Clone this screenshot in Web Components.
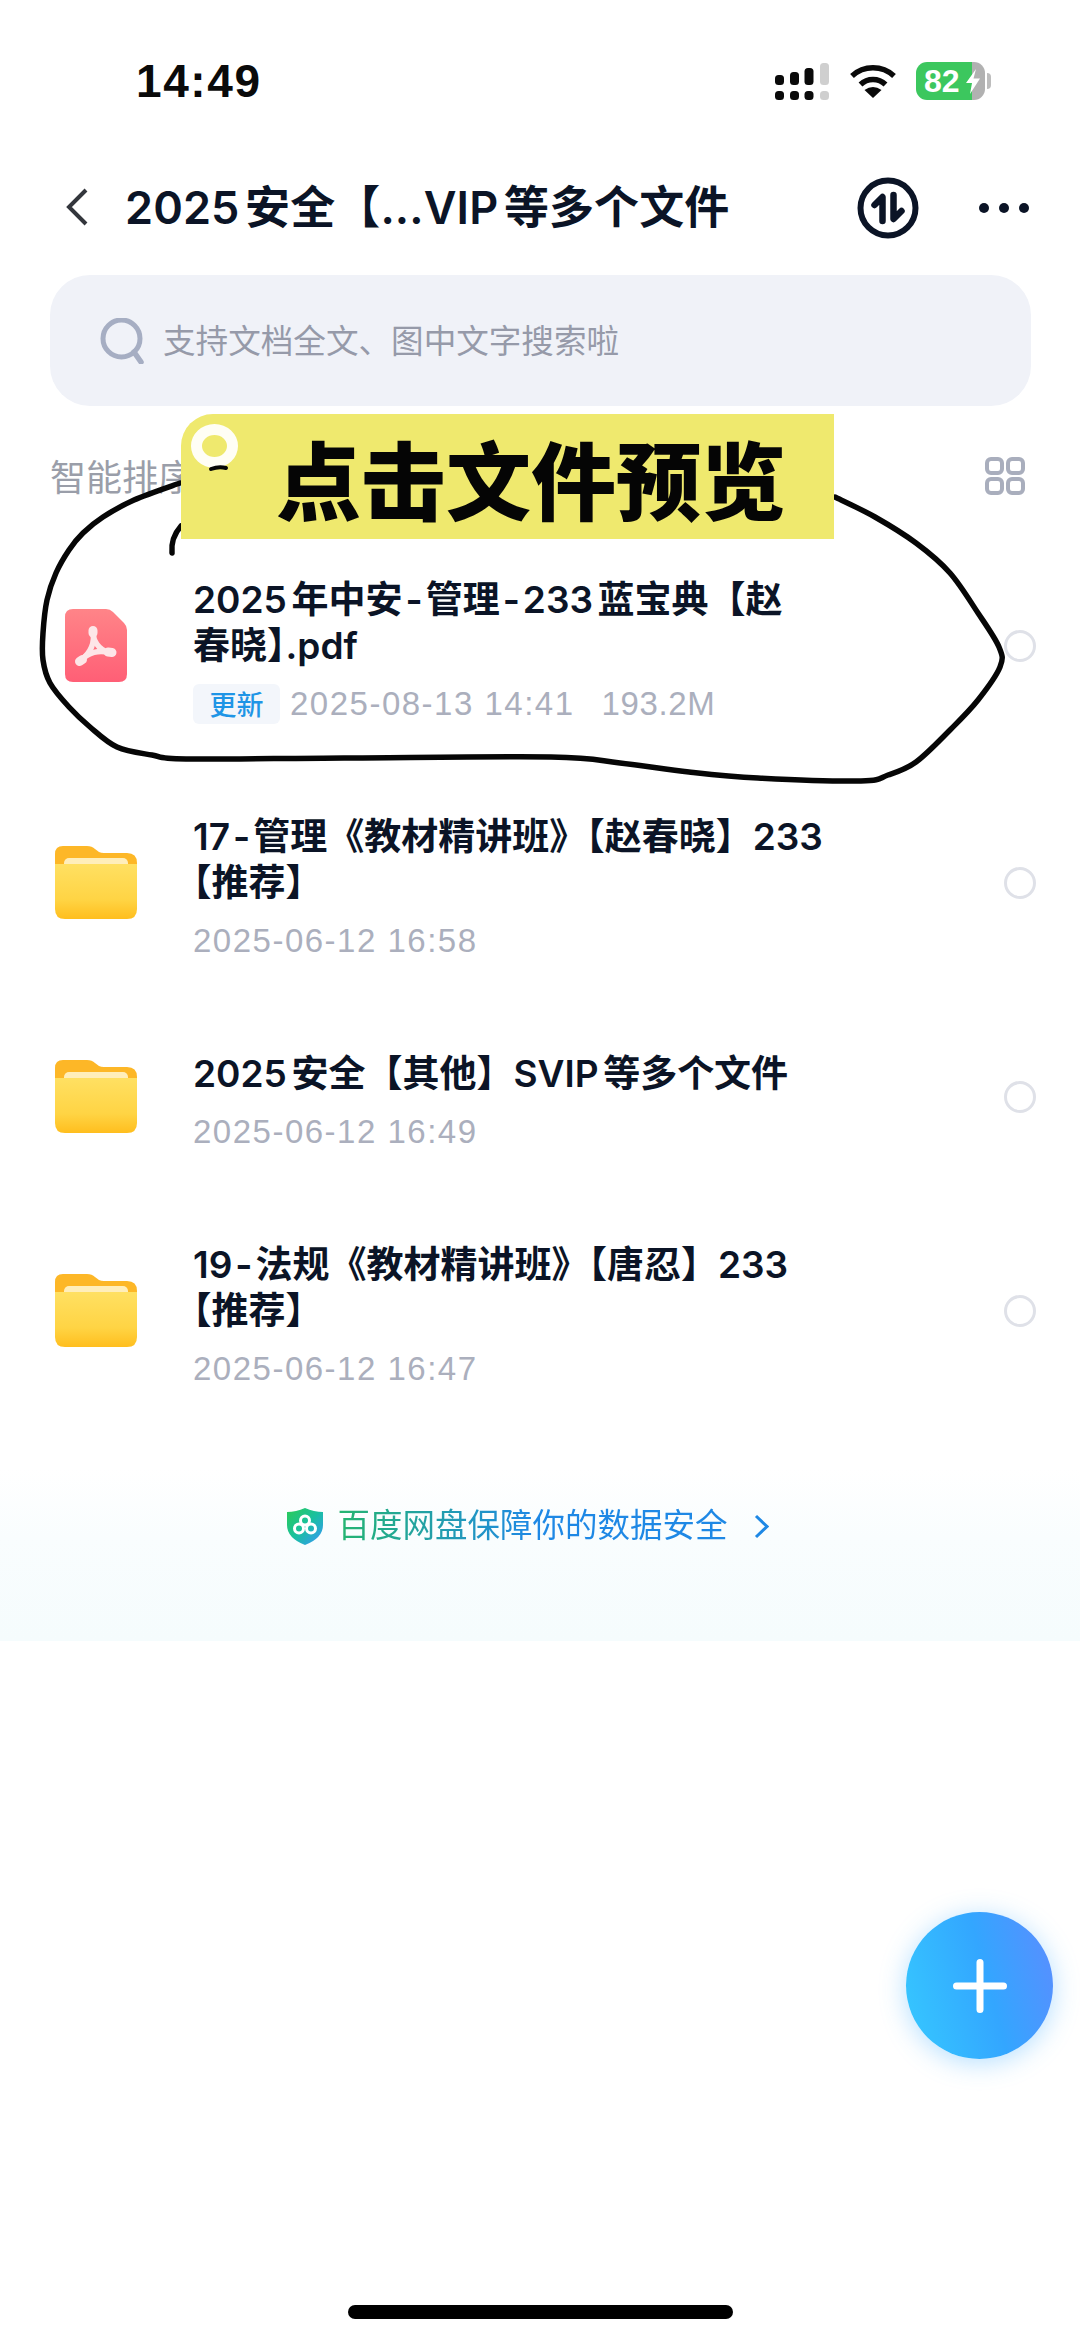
<!DOCTYPE html>
<html lang="zh-CN">
<head>
<meta charset="utf-8">
<title>百度网盘</title>
<style>
html, body { margin: 0; padding: 0; background: #fff; }
body {
  width: 1080px;
  height: 2341px;
  overflow: hidden;
  font-family: "Inter", "Noto Sans CJK SC", sans-serif;
  color: #0b1426;
}
</style>
</head>
<body>
<file-page>
  <status-bar time="14:49" level="82"></status-bar>
  <nav-bar>2025安全【...VIP等多个文件</nav-bar>
  <search-box>支持文档全文、图中文字搜索啦</search-box>
  <sort-bar>智能排序</sort-bar>
  <file-list>
    <file-row type="pdf" tag="更新" date="2025-08-13 14:41" size="193.2M">2025年中安<span class="dash">-</span>管理<span class="dash">-</span>233蓝宝典【赵<br>春晓<span class="halt">】</span>.pdf</file-row>
    <file-row type="folder" date="2025-06-12 16:58">17<span class="dash">-</span>管理《教材精讲班》【赵春晓】233<br>【推荐】</file-row>
    <file-row type="folder" date="2025-06-12 16:49">2025安全【其他】SVIP等多个文件</file-row>
    <file-row type="folder" date="2025-06-12 16:47">19<span class="dash">-</span>法规《教材精讲班》【唐忍】233<br>【推荐】</file-row>
  </file-list>
  <safe-banner>百度网盘保障你的数据安全</safe-banner>
  <home-bar></home-bar>
  <add-button></add-button>
  <hand-note>点击文件预览</hand-note>
</file-page>

<script>
class FilePage extends HTMLElement {
    constructor() {
        super();
        this.attachShadow({ mode: "open" }).innerHTML = `
<style>
:host { display: flex; flex-direction: column; position: relative; width: 1080px; height: 2341px; overflow: hidden; background: #fff; }
</style>
<slot></slot>`;
    }
}

class StatusBar extends HTMLElement {
    constructor() {
        super();
        const time = this.getAttribute("time");
        const level = this.getAttribute("level");
        this.attachShadow({ mode: "open" }).innerHTML = `
<style>
:host { display: flex; align-items: center; height: 162px; padding: 0 89px 0 136px; flex: none; }
.time { font: 700 46px/1 "Liberation Sans", sans-serif; color: #0a0a0a; letter-spacing: 1.6px; }
.right { margin-left: auto; display: flex; align-items: center; }
svg { display: block; }
.wifi { margin-left: 21px; }
.bat { margin-left: 20px; display: flex; align-items: center; }
.body { position: relative; width: 69px; height: 38px; border-radius: 11px; overflow: hidden; background: linear-gradient(90deg, #3cc75e 0 56px, #b1b1b1 56px); color: #fff; font: 700 32px/38px "Liberation Sans", sans-serif; padding-left: 8px; box-sizing: border-box; }
.bolt { position: absolute; left: 50px; top: 7px; }
.nub { width: 4px; height: 16px; margin-left: 2px; background: #bdbdbd; border-radius: 0 4px 4px 0; }
</style>
<span class="time">${time}</span>
<div class="right">
  <svg width="54" height="37" viewBox="0 0 54 37">
    <g fill="#0a0a0a">
      <rect x="0" y="12" width="9" height="10" rx="3.5"/><rect x="15" y="9" width="9" height="13" rx="3.5"/><rect x="29.500" y="5" width="9" height="17" rx="3.5"/>
      <rect x="0" y="28" width="9" height="9" rx="3.5"/><rect x="15" y="28" width="9" height="9" rx="3.5"/><rect x="29.500" y="28" width="9" height="9" rx="3.5"/>
    </g>
    <g fill="#cfcfcf"><rect x="45" y="0" width="9" height="22" rx="3.5"/><rect x="45" y="28" width="9" height="9" rx="3.5"/></g>
  </svg>
  <svg class="wifi" width="46" height="34" viewBox="0 0 46 34">
    <path d="M2 12A31 31 0 0 1 44 12M10.500 20.500A18 18 0 0 1 35.500 20.500" fill="none" stroke="#0a0a0a" stroke-width="5.500"/>
    <path d="M23 34L14.500 26Q23 20 31.500 26Z" fill="#0a0a0a"/>
  </svg>
  <div class="bat">
    <div class="body">${level}
      <svg class="bolt" width="14" height="25" viewBox="0 0 14 25"><path d="M10 0L0 14H6L4 25L14 9.500H7.500Z" fill="#fff"/></svg>
    </div>
    <div class="nub"></div>
  </div>
</div>`;
    }
}

class NavBar extends HTMLElement {
    constructor() {
        super();
        this.attachShadow({ mode: "open" }).innerHTML = `
<style>
:host { display: flex; align-items: center; height: 90px; flex: none; padding: 0 51px 0 64px; color: #0b1426; }
.back { flex: none; margin-right: 35px; }
.title { font-size: 45px; font-weight: 600; letter-spacing: .1px; white-space: nowrap; text-autospace: normal; padding-bottom: 5px; }
.acts { margin-left: auto; display: flex; align-items: center; }
svg { display: block; }
.sync { margin-top: 2px; }
.more { margin-left: 60px; display: flex; gap: 10px; margin-top: 2px; }
.more i { width: 10px; height: 10px; border-radius: 50%; background: #0b1426; }
</style>
<svg class="back" width="26" height="40" viewBox="0 0 26 40"><path d="M22 3L5 20L22 37" fill="none" stroke="#33363c" stroke-width="4"/></svg>
<span class="title"><slot></slot></span>
<div class="acts">
  <svg class="sync" width="62" height="62" viewBox="-31 -31 62 62">
    <circle r="27.500" fill="none" stroke="#0b1426" stroke-width="6"/>
    <path d="M-13.500 -3L-5.500 -11V13M13.500 3L5.500 11V-13" fill="none" stroke="#0b1426" stroke-width="6.500" stroke-linecap="round" stroke-linejoin="round"/>
  </svg>
  <div class="more"><i></i><i></i><i></i></div>
</div>`;
    }
}

class SearchBox extends HTMLElement {
    constructor() {
        super();
        this.attachShadow({ mode: "open" }).innerHTML = `
<style>
:host { display: flex; align-items: center; flex: none; height: 131px; margin: 23px 49px 0 50px; padding-left: 50px; border-radius: 40px; background: #f0f2f8; color: #969aa9; font-size: 32.600px; }
svg { display: block; margin-right: 19px; }
span { padding-bottom: 5px; }
</style>
<svg width="44" height="46" viewBox="0 0 44 46"><circle cx="21.500" cy="20.500" r="18.500" fill="none" stroke="#a6aec3" stroke-width="5"/><path d="M34 34L41 44" stroke="#a6aec3" stroke-width="5.500" stroke-linecap="round"/></svg>
<span><slot></slot></span>`;
    }
}

class SortBar extends HTMLElement {
    constructor() {
        super();
        this.attachShadow({ mode: "open" }).innerHTML = `
<style>
:host { display: flex; align-items: center; justify-content: space-between; flex: none; height: 70px; margin-top: 35px; padding: 0 55px 0 50px; color: #9a9ea9; font-size: 36px; }
svg { display: block; }
span { padding-bottom: 3px; }
</style>
<span><slot></slot></span>
<svg width="40" height="38" viewBox="0 0 40 38" fill="none" stroke="#a9aebd" stroke-width="4">
  <rect x="2" y="2" width="15" height="14" rx="4"/><rect x="23" y="2" width="15" height="14" rx="4"/>
  <rect x="2" y="22" width="15" height="14" rx="4"/><rect x="23" y="22" width="15" height="14" rx="4"/>
</svg>`;
    }
}

class FileList extends HTMLElement {
    constructor() {
        super();
        this.attachShadow({ mode: "open" }).innerHTML = `
<style>:host { display: flex; flex-direction: column; flex: none; margin-top: 22px; }</style>
<slot></slot>`;
    }
}

const pdfIcon = `
<svg width="62" height="73" viewBox="0 0 62 73">
  <defs><linearGradient id="p" x1="0" y1="0" x2="0" y2="1"><stop offset="0" stop-color="#ff8488"/><stop offset="1" stop-color="#ff5f76"/></linearGradient></defs>
  <path d="M8 0H41Q45 0 48 3L59 14Q62 17 62 21V65Q62 73 54 73H8Q0 73 0 65V8Q0 0 8 0Z" fill="url(#p)"/>
  <g fill="none" stroke="#fde6e8" stroke-linecap="round" stroke-linejoin="round">
    <path d="M28 23C30 33 26 44 16 51" stroke-width="5.500"/>
    <path d="M28 23C28 31 33 41 45 44" stroke-width="5.500"/>
    <path d="M16 51C23 44 34 40 45 44" stroke-width="5.500"/>
    <path d="M28 21.500V24M14.500 52.500L17.500 50.500M43 43L47 43.500" stroke-width="9"/>
  </g>
</svg>`;

const folderIcon = `
<svg width="82" height="73" viewBox="0 0 82 73">
  <defs><linearGradient id="f" x1="0" y1="0" x2="0" y2="1"><stop offset="0" stop-color="#ffe062"/><stop offset="0.650" stop-color="#ffd444"/><stop offset="1" stop-color="#ffbe1e"/></linearGradient></defs>
  <path d="M8 0H32Q37 0 40 3L44 6Q46 7 49 7H72Q82 7 82 17V40H0V8Q0 0 8 0Z" fill="#fdb727"/>
  <rect x="9" y="12" width="64" height="12" rx="5" fill="#ffeeba"/>
  <path d="M0 18H82V63Q82 73 72 73H10Q0 73 0 63Z" fill="url(#f)"/>
</svg>`;

class FileRow extends HTMLElement {
    constructor() {
        super();
        const type = this.getAttribute("type");
        const tag = this.getAttribute("tag");
        const size = this.getAttribute("size");
        this.attachShadow({ mode: "open" }).innerHTML = `
<style>
:host { display: flex; align-items: center; flex: none; padding: 44px 44px 44px 55px; }
.icon { flex: none; width: 82px; display: flex; justify-content: center; margin: 0 56px 12px 0; }
.text { flex: 1; min-width: 0; }
.name { font-size: 37px; line-height: 46px; font-weight: 600; color: #0b1426; white-space: nowrap; text-autospace: normal; text-spacing-trim: trim-start; }
::slotted(.halt) { font-feature-settings: "halt"; }
::slotted(.dash) { margin: 0 3px; }
.meta { display: flex; align-items: center; height: 44px; margin-top: 13px; font: 400 33px/44px "Liberation Sans", sans-serif; letter-spacing: 1.5px; color: #abafbd; }
.tag { width: 87px; height: 40px; margin-right: 10px; border-radius: 6px; background: #f3f6fb; color: #1f95e6; font: 500 27px/40px "Noto Sans CJK SC", sans-serif; text-align: center; letter-spacing: 0; }
.size { margin-left: 27px; letter-spacing: .6px; }
.radio { flex: none; width: 26px; height: 26px; border: 3px solid #dfe1e8; border-radius: 50%; margin: 0 0 12px 20px; }
svg { display: block; }
</style>
<div class="icon">${type === "pdf" ? pdfIcon : folderIcon}</div>
<div class="text">
  <div class="name"><slot></slot></div>
  <div class="meta">
    ${tag ? `<span class="tag">${tag}</span>` : ""}
    <span>${this.getAttribute("date")}</span>
    ${size ? `<span class="size">${size}</span>` : ""}
  </div>
</div>
<div class="radio"></div>`;
    }
}

class SafeBanner extends HTMLElement {
    constructor() {
        super();
        this.attachShadow({ mode: "open" }).innerHTML = `
<style>
:host { display: flex; align-items: flex-start; justify-content: center; flex: none; box-sizing: border-box; height: 173px; margin-top: 33px; padding: 40px 24px 0 0; background: linear-gradient(180deg, #fff 0, #f9fdfe 40%, #f5fcfd 100%); }
.in { display: flex; align-items: center; height: 36px; }
svg { display: block; }
.label { margin: 0 26px 0 14px; font-size: 32.500px; line-height: 36px; background: linear-gradient(90deg, #25b56f, #1e88e5 50%); -webkit-background-clip: text; background-clip: text; color: transparent; }
</style>
<div class="in">
  <svg width="36" height="37" viewBox="0 0 36 37">
    <defs><linearGradient id="s" x1="0" y1="0" x2="1" y2="1"><stop offset="0" stop-color="#2ccb55"/><stop offset="0.500" stop-color="#19c0a0"/><stop offset="1" stop-color="#3a94ff"/></linearGradient></defs>
    <path d="M18 0Q27 4 36 4V17Q36 30 18 37Q0 30 0 17V4Q9 4 18 0Z" fill="url(#s)"/>
    <g fill="none" stroke="#fff" stroke-width="3"><circle cx="18" cy="12.500" r="4.500"/><circle cx="12" cy="20.500" r="4.500"/><circle cx="24" cy="20.500" r="4.500"/></g>
  </svg>
  <span class="label"><slot></slot></span>
  <svg width="15" height="25" viewBox="0 0 15 25"><path d="M2 2L13 12.500L2 23" fill="none" stroke="#1e88e5" stroke-width="3"/></svg>
</div>`;
    }
}

class HomeBar extends HTMLElement {
    constructor() {
        super();
        this.attachShadow({ mode: "open" }).innerHTML = `
<style>
:host { display: block; flex: none; width: 385px; height: 14px; margin: auto auto 22px 348px; border-radius: 7px; background: #000; }
</style>`;
    }
}

class AddButton extends HTMLElement {
    constructor() {
        super();
        this.attachShadow({ mode: "open" }).innerHTML = `
<style>
:host { position: absolute; left: 906px; top: 1912px; width: 147px; height: 147px; border-radius: 50%; display: flex; align-items: center; justify-content: center; background: linear-gradient(75deg, #36c9ff 0%, #33a6ff 55%, #5c8cff 100%); box-shadow: 0 4px 26px rgba(60, 170, 255, .38); }
svg { display: block; }
</style>
<svg width="54" height="54" viewBox="0 0 54 54"><path d="M3.500 27H50.500M27 3.500V50.500" stroke="#fff" stroke-width="7" stroke-linecap="round"/></svg>`;
    }
}

const scribble = [
    [180,483],[134,500],[103,517],[83,533],[69,550],[56,573],[47,600],[43,633],[43,660],[50,683],[69,707],[90,727],[117,747],[152,755],[186,759],
    [344,758],[551,757],[620,763],[689,772],[758,778],[861,781],[888,775],[916,762],[950,730],[978,700],[1000,667],[999,647],[978,613],[950,573],[916,543],[875,517],[835,497]
];

// catmull-rom through the points, so the marker line has no corners
function smoothPath(pts) {
    let d = `M${pts[0][0]} ${pts[0][1]}`;
    for (let i = 0; i < pts.length - 1; i++) {
        const a = pts[Math.max(i - 1, 0)];
        const b = pts[i];
        const c = pts[i + 1];
        const e = pts[Math.min(i + 2, pts.length - 1)];
        const c1 = [b[0] + (c[0] - a[0]) / 6, b[1] + (c[1] - a[1]) / 6];
        const c2 = [c[0] - (e[0] - b[0]) / 6, c[1] - (e[1] - b[1]) / 6];
        d += `C${c1[0].toFixed(1)} ${c1[1].toFixed(1)} ${c2[0].toFixed(1)} ${c2[1].toFixed(1)} ${c[0]} ${c[1]}`;
    }
    return d;
}

// the marker scribble and sticker lie over the list, so they sit on their own canvas
class HandNote extends HTMLElement {
    constructor() {
        super();
        this.attachShadow({ mode: "open" }).innerHTML = `
<style>
:host { position: absolute; inset: 0; display: block; pointer-events: none; }
svg { position: absolute; left: 0; top: 0; }
.sticker { position: absolute; left: 181px; top: 414px; width: 653px; height: 125px; box-sizing: border-box; padding-left: 95px; border-top-left-radius: 32px; background: #efe96e; display: flex; align-items: center; font: 900 85px/1 "Noto Sans CJK SC", sans-serif; color: #050505; white-space: nowrap; }
.ring { position: absolute; left: 10px; top: 10px; width: 25px; height: 22px; border: 11px solid #fffef5; border-radius: 50%; }
</style>
<svg width="1080" height="900" viewBox="0 0 1080 900" fill="none" stroke="#060606" stroke-width="5.500" stroke-linecap="round" stroke-linejoin="round">
  <path d="${smoothPath(scribble)}"/>
  <path d="M172 553C171 543 174 534 181 526"/>
</svg>
<div class="sticker"><span class="ring"></span><slot></slot></div>
<svg width="1080" height="900" viewBox="0 0 1080 900" fill="none" stroke="#060606" stroke-width="4" stroke-linecap="round"><path d="M211 469Q219 466 226 468"/></svg>`;
    }
}

customElements.define("file-page", FilePage);
customElements.define("status-bar", StatusBar);
customElements.define("nav-bar", NavBar);
customElements.define("search-box", SearchBox);
customElements.define("sort-bar", SortBar);
customElements.define("file-list", FileList);
customElements.define("file-row", FileRow);
customElements.define("safe-banner", SafeBanner);
customElements.define("home-bar", HomeBar);
customElements.define("add-button", AddButton);
customElements.define("hand-note", HandNote);
</script>
</body>
</html>
